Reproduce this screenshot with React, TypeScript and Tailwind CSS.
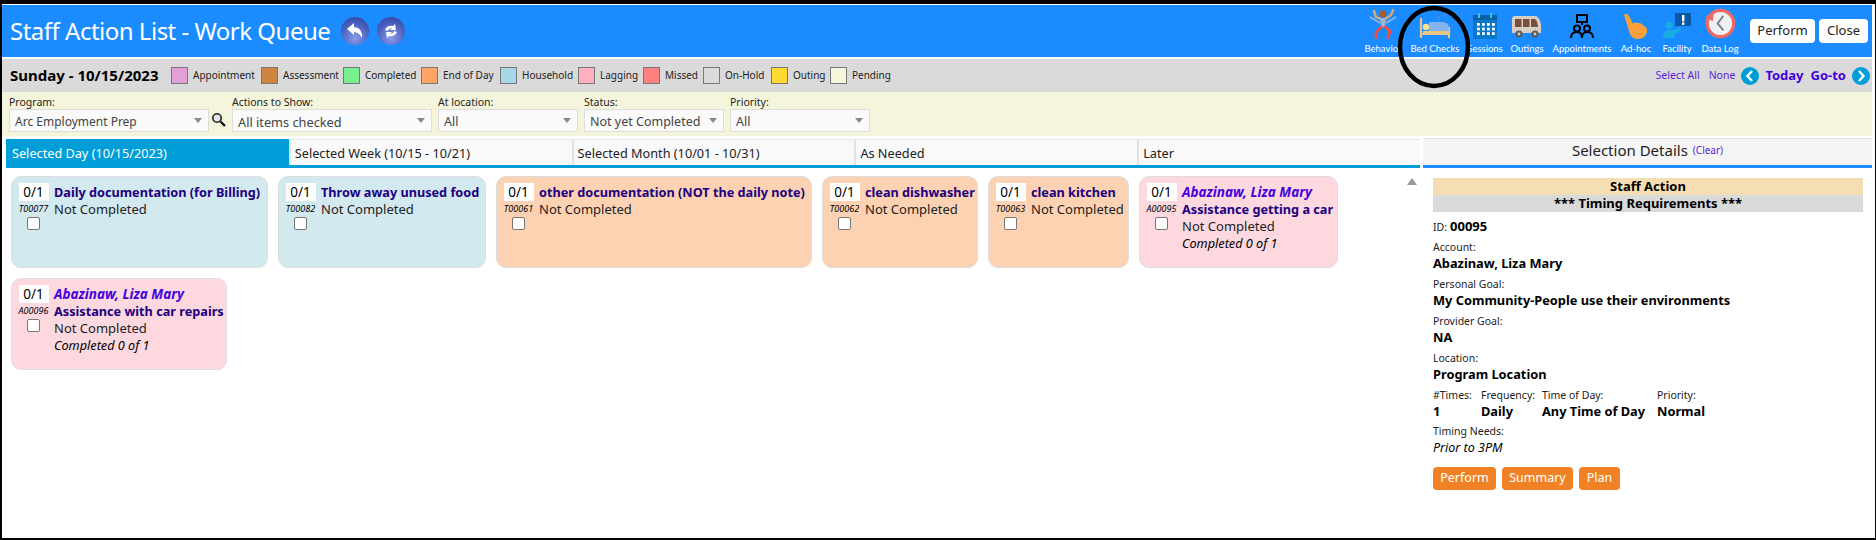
import React from 'react';

const legend = [
  { label: 'Appointment', color: 'bg-[#e29fd8]', w: 'w-[65px]' },
  { label: 'Assessment', color: 'bg-[#cd853f]', w: 'w-[57px]' },
  { label: 'Completed', color: 'bg-[#78f090]', w: 'w-[53px]' },
  { label: 'End of Day', color: 'bg-[#ffa566]', w: 'w-[54px]' },
  { label: 'Household', color: 'bg-[#a8d8e8]', w: 'w-[53px]' },
  { label: 'Lagging', color: 'bg-[#ffb0bc]', w: 'w-[40px]' },
  { label: 'Missed', color: 'bg-[#ff8080]', w: 'w-[35px]' },
  { label: 'On-Hold', color: 'bg-[#dadada]', w: 'w-[43px]' },
  { label: 'Outing', color: 'bg-[#ffd830]', w: 'w-[34px]' },
  { label: 'Pending', color: 'bg-[#f5f5dc]', w: 'w-[44px]' },
];

const filters = [
  { label: 'Program:', value: 'Arc Employment Prep', w: 'w-[200px]', text: 'text-[12px]', search: true },
  { label: 'Actions to Show:', value: 'All items checked', w: 'w-[200px]', text: 'text-[12.75px]' },
  { label: 'At location:', value: 'All', w: 'w-[140px]', text: 'text-[12.5px]' },
  { label: 'Status:', value: 'Not yet Completed', w: 'w-[140px]', text: 'text-[12.5px]' },
  { label: 'Priority:', value: 'All', w: 'w-[140px]', text: 'text-[12.5px]' },
];

const tabs = ['Selected Day (10/15/2023)', 'Selected Week (10/15 - 10/21)', 'Selected Month (10/01 - 10/31)', 'As Needed', 'Later'];

const cards = [
  { id: 'T00077', title: 'Daily documentation (for Billing)', bg: 'bg-[#d3e9f0]', w: 'w-[257px]' },
  { id: 'T00082', title: 'Throw away unused food', bg: 'bg-[#d3e9f0]', w: 'w-[208px]' },
  { id: 'T00061', title: 'other documentation (NOT the daily note)', bg: 'bg-[#fdd2b3]', w: 'w-[316px]' },
  { id: 'T00062', title: 'clean dishwasher', bg: 'bg-[#fdd2b3]', w: 'w-[156px]' },
  { id: 'T00063', title: 'clean kitchen', bg: 'bg-[#fdd2b3]', w: 'w-[141px]' },
  { id: 'A00095', name: 'Abazinaw, Liza Mary', title: 'Assistance getting a car', bg: 'bg-[#fdd8df]', w: 'w-[199px]' },
  { id: 'A00096', name: 'Abazinaw, Liza Mary', title: 'Assistance with car repairs', bg: 'bg-[#fdd8df]', w: 'w-[216px]' },
];

function BehaviorIcon() {
  return (
    <svg width="30" height="30" viewBox="0 0 30 30">
      <path d="M13 10 L8 8 L6 2 M17 10 L23 6 L25 1" stroke="#d9a878" strokeWidth="2.4" fill="none" strokeLinecap="round" />
      <circle cx="15" cy="5" r="3.4" fill="#a85a28" />
      <path d="M2 8 L12 14 M28 8 L18 14" stroke="#9cb4cc" strokeWidth="1.6" />
      <path d="M12 9h6l-1 9h-4z" fill="#9cb4d0" />
      <path d="M13 18 L8 23 L8 29 M17 18 L22 22 L20 29" stroke="#f04f3c" strokeWidth="2.8" fill="none" strokeLinecap="round" />
    </svg>
  );
}

function BedIcon() {
  return (
    <svg width="32" height="26" viewBox="0 0 32 26">
      <path d="M2 5v20M2 21h28M30 14v11" stroke="#eac483" strokeWidth="2.2" fill="none" />
      <path d="M10 18V9h13q7 0 7 6v3z" fill="#85b3ee" />
      <circle cx="7" cy="14" r="3.2" fill="#f6e48e" />
      <path d="M4 18h26v3H4z" fill="#eac483" />
      <path d="M18 4h3l-3 3h3M24 0h3l-3 3h3" stroke="#5a8fd8" strokeWidth="1" fill="none" />
    </svg>
  );
}

function CalendarIcon() {
  const cells = [];
  for (let y = 0; y < 3; y++) {
    for (let x = 0; x < 4; x++) {
      cells.push(<rect key={`${x}-${y}`} x={4 + x * 5} y={10 + y * 4.6} width="2.8" height="2.8" fill="#fff" />);
    }
  }
  return (
    <svg width="24" height="26" viewBox="0 0 24 26">
      <rect x="0" y="2" width="24" height="24" fill="#0a78c8" />
      <rect x="0" y="2" width="24" height="5" fill="#0860a8" />
      <rect x="5" y="0" width="2" height="5" fill="#35c4d8" />
      <rect x="17" y="0" width="2" height="5" fill="#35c4d8" />
      {cells}
    </svg>
  );
}

function VanIcon() {
  return (
    <svg width="30" height="24" viewBox="0 0 30 24">
      <path d="M3 1h20q4 0 6 8v9H0V4q0-3 3-3z" fill="#d7cdc5" />
      <rect x="3" y="4" width="6.5" height="8" fill="#78503c" />
      <rect x="11" y="4" width="6.5" height="8" fill="#78503c" />
      <path d="M19 4h4q2 1 3 8h-7z" fill="#78503c" />
      <circle cx="7" cy="19" r="3.6" fill="#605a55" />
      <circle cx="23" cy="19" r="3.6" fill="#605a55" />
      <circle cx="7" cy="19" r="1.4" fill="#ccc" />
      <circle cx="23" cy="19" r="1.4" fill="#ccc" />
    </svg>
  );
}

function MeetingIcon() {
  return (
    <svg width="24" height="25" viewBox="0 0 24 25" fill="none" stroke="#000" strokeWidth="2">
      <rect x="7" y="1" width="10" height="7" />
      <path d="M12 8v3" />
      <circle cx="7" cy="14.5" r="3" />
      <circle cx="17" cy="14.5" r="3" />
      <path d="M1 24q0-6 6-6 5 0 5 6 0-6 5-6 6 0 6 6" />
    </svg>
  );
}

function HandIcon() {
  return (
    <svg width="26" height="26" viewBox="0 0 26 26">
      <path d="M1 2q2-3 5 1l4 8 2-2 2 1 3 0 3 2q5 3 4 7-2 7-9 7-6 0-8-5z" fill="#f9a03c" />
    </svg>
  );
}

function FacilityIcon() {
  return (
    <svg width="28" height="26" viewBox="0 0 28 26">
      <rect x="12" y="0" width="16" height="13" fill="#0a58a8" />
      <rect x="19" y="2" width="2.4" height="6.5" fill="#fff" />
      <rect x="19" y="9.5" width="2.4" height="2.4" fill="#fff" />
      <circle cx="6" cy="12" r="3.6" fill="#18aee0" />
      <path d="M0 25q0-8 7-8h5l5-3 1 2-5 5h-2v4z" fill="#18aee0" />
    </svg>
  );
}

function ClockIcon() {
  return (
    <svg width="31" height="31" viewBox="0 0 32 32">
      <circle cx="16" cy="16" r="13.6" fill="#eef0f4" stroke="#ee6a62" strokeWidth="3.4" />
      <path d="M19 8l-6 8 6 7" stroke="#77808c" strokeWidth="2" fill="none" />
      <path d="M0 9l9 -4 -1 9z" fill="#ee6a62" />
    </svg>
  );
}

function GlobeButton({ children }: { children: React.ReactNode }) {
  return (
    <div className="w-[28px] h-[28px] rounded-full bg-[radial-gradient(circle_at_50%_75%,#8a9ae8,#4a62c0_55%,#2c3e9c)] flex items-center justify-center">
      {children}
    </div>
  );
}

function NavItem({ label, icon, w }: { label: string; icon: React.ReactNode; w: string }) {
  return (
    <div className={`${w} flex flex-col items-center`}>
      <div className="h-[32px] flex items-end justify-center">{icon}</div>
      <div className="font-['Lato',sans-serif] text-[9.5px] leading-[14px] mt-[3px] text-white whitespace-nowrap">{label}</div>
    </div>
  );
}

function Field({ label, value }: { label: string; value: string }) {
  return (
    <div>
      <div className="text-[10.5px] leading-[14px] text-[#222]">{label}</div>
      <div className="text-[12.8px] leading-[17px] font-bold text-black mt-[1px]">{value}</div>
    </div>
  );
}

function NavArrow({ dir }: { dir: 'left' | 'right' }) {
  return (
    <div className="w-[18px] h-[18px] rounded-full bg-[#009ed8] flex items-center justify-center ml-[6px]">
      <svg width="10" height="12" viewBox="0 0 10 12" fill="none">
        <path d={dir === 'left' ? 'M7 1L2.5 6L7 11' : 'M3 1L7.5 6L3 11'} stroke="#fff" strokeWidth="2.4" />
      </svg>
    </div>
  );
}

export default function App() {
  return (
    <div className="relative w-[1876px] h-[540px] bg-white border-black border-t-[4px] border-l-[2px] border-r-[1px] border-b-[2px] pr-[3px] pt-[1px] overflow-hidden font-['Noto_Sans',sans-serif] text-[#222]">
      {/* header */}
      <div className="h-[52px] bg-[#1a8cff] flex items-center pl-[8px] pr-[4px]">
        <div className="text-[24px] text-white leading-none whitespace-nowrap tracking-[-0.5px]">Staff Action List - Work Queue</div>
        <div className="flex gap-[8px] ml-[11px]">
          <GlobeButton>
            <svg width="18" height="16" viewBox="0 0 18 16">
              <path d="M1 6 L8 0 V4 Q17 5 16 15 Q13 9 8 9 V12z" fill="#fff" />
            </svg>
          </GlobeButton>
          <GlobeButton>
            <svg width="18" height="18" viewBox="0 0 18 18">
              <path d="M3 8 Q5 3 11 4 L13 2 L14 8 L8 8 L10 6 Q7 6 6 9z M15 10 Q13 15 7 14 L5 16 L4 10 L10 10 L8 12 Q11 12 12 9z" fill="#fff" />
            </svg>
          </GlobeButton>
        </div>
        <div className="ml-auto flex items-center">
          <div className="flex mr-[11px]">
            <NavItem w="w-[52px]" label="Behavior" icon={<BehaviorIcon />} />
            <NavItem w="w-[52px]" label="Bed Checks" icon={<BedIcon />} />
            <NavItem w="w-[48px]" label="Sessions" icon={<CalendarIcon />} />
            <NavItem w="w-[36px]" label="Outings" icon={<VanIcon />} />
            <NavItem w="w-[74px]" label="Appointments" icon={<MeetingIcon />} />
            <NavItem w="w-[34px]" label="Ad-hoc" icon={<HandIcon />} />
            <NavItem w="w-[48px]" label="Facility" icon={<FacilityIcon />} />
            <NavItem w="w-[38px]" label="Data Log" icon={<ClockIcon />} />
          </div>
          <div className="flex gap-[4px]">
            <button className="h-[24px] w-[65px] bg-white rounded-[4px] text-[13px] text-[#222]">Perform</button>
            <button className="h-[24px] w-[49px] bg-white rounded-[4px] text-[13px] text-[#222]">Close</button>
          </div>
        </div>
      </div>

      {/* date and legend */}
      <div className="h-[33px] mt-[2px] bg-[#dadada] flex items-center pl-[8px] pr-[2px]">
        <div className="text-[15px] font-bold text-black whitespace-nowrap w-[161px]">Sunday - 10/15/2023</div>
        <div className="flex items-center gap-[3px] -mt-[1px]">
          {legend.map((l) => (
            <div key={l.label} className="flex items-center">
              <div className={`w-[17px] h-[17px] border border-[#777] ${l.color}`} />
              <div className={`text-[10px] ml-[5px] whitespace-nowrap ${l.w}`}>{l.label}</div>
            </div>
          ))}
        </div>
        <div className="ml-auto flex items-center text-[#5a1ee0]">
          <span className="text-[10.5px]">Select All</span>
          <span className="text-[10.5px] ml-[9px]">None</span>
          <NavArrow dir="left" />
          <span className="text-[13px] font-bold ml-[6px] text-[#4400dd]">Today</span>
          <span className="text-[13px] font-bold ml-[7px] text-[#4400dd]">Go-to</span>
          <NavArrow dir="right" />
        </div>
      </div>

      {/* filters */}
      <div className="h-[44px] bg-[#f5f5dc] flex items-start gap-[6px] pl-[7px] pt-[3px]">
        {filters.map((f) => (
          <div key={f.label} className="flex">
            <div>
              <div className="text-[10.5px] leading-[14px] text-[#222]">{f.label}</div>
              <div className={`${f.w} h-[23px] bg-[#fafafa] border border-[#ddd] flex items-center justify-between pl-[5px] pr-[6px]`}>
                <span className={`${f.text} leading-[16px] pt-[3px] text-[#444] whitespace-nowrap`}>{f.value}</span>
                <svg width="8" height="5" viewBox="0 0 8 5"><path d="M0 0h8L4 5z" fill="#888" /></svg>
              </div>
            </div>
            {f.search && (
              <svg className="mt-[17px] ml-[2px]" width="15" height="16" viewBox="0 0 15 16" fill="none">
                <circle cx="6" cy="6" r="4.2" stroke="#222" strokeWidth="1.6" fill="#dfe8ee" />
                <path d="M9.5 9.5L14 14" stroke="#111" strokeWidth="2.4" />
              </svg>
            )}
          </div>
        ))}
      </div>

      {/* main */}
      <div className="flex mt-[3px] pl-[4px]">
        <div className="w-[1414px]">
          <div className="flex h-[29px] border-b-[3px] border-[#009ed8]">
            {tabs.map((t, i) => (
              <div
                key={t}
                className={`w-[283px] text-[12.7px] flex items-center pt-[3px] whitespace-nowrap ${i === 0 ? 'bg-[#009ed8] text-white pl-[6px]' : 'bg-[#f9f9f9] border-t border-l-2 border-[#e2e2e2] text-[#222] pl-[4px]'}`}
              >
                {t}
              </div>
            ))}
          </div>
          <div className="relative flex flex-wrap gap-[10px] pt-[8px] pl-[5px] pr-[60px]">
            {cards.map((c) => (
              <div key={c.id} className={`${c.w} h-[92px] ${c.bg} border border-[#ddd] rounded-[10px] flex pl-[6px] pt-[6px]`}>
                <div className="w-[31px] flex flex-col items-center shrink-0">
                  <div className="w-[30px] h-[18px] bg-white text-[13.5px] leading-[19px] text-center text-black">0/1</div>
                  <div className="text-[9px] leading-[13px] italic text-black mt-[1px]">{c.id}</div>
                  <input type="checkbox" className="appearance-none w-[13px] h-[13px] bg-white border border-[#767676] rounded-[2px] mt-[2px]" />
                </div>
                <div className="pl-[5px] pt-[1px] text-[12.7px] leading-[17px] whitespace-nowrap">
                  {c.name && <div className="font-bold italic text-[13.5px] text-[#4400dd]">{c.name}</div>}
                  <div className="font-bold text-[#200080]">{c.title}</div>
                  <div className="text-[13px] text-[#222]">Not Completed</div>
                  {c.name && <div className="italic text-black">Completed 0 of 1</div>}
                </div>
              </div>
            ))}
            <svg className="absolute right-[3px] top-[10px]" width="10" height="7" viewBox="0 0 10 7"><path d="M0 7h10L5 0z" fill="#999" /></svg>
          </div>
        </div>

        <div className="ml-[3px] w-[449px] -mt-[1px]">
          <div className="h-[30px] bg-[#f5f5f5] border-t border-[#e2e2e2] border-b-[3px] border-b-[#1a8cff] flex items-center justify-center gap-[5px] pb-[3px]">
            <span className="text-[15px] text-[#222]">Selection Details</span>
            <span className="text-[10px] text-[#5a1ee0]">(Clear)</span>
          </div>
          <div className="pl-[10px] pr-[9px] pt-[10px]">
            <div className="text-center text-[13px] font-bold leading-[17px] text-black bg-[#f5deb3]">Staff Action</div>
            <div className="text-center text-[13px] font-bold leading-[17px] text-black bg-[#dadada]">*** Timing Requirements ***</div>
            <div className="mt-[5px] flex items-baseline gap-[3px]">
              <span className="text-[10.5px]">ID:</span>
              <span className="text-[13px] font-bold text-black">00095</span>
            </div>
            <div className="flex flex-col gap-[5px] mt-[3px]">
              <Field label="Account:" value="Abazinaw, Liza Mary" />
              <Field label="Personal Goal:" value="My Community-People use their environments" />
              <Field label="Provider Goal:" value="NA" />
              <Field label="Location:" value="Program Location" />
            </div>
            <div className="flex mt-[5px]">
              <div className="w-[48px]"><Field label="#Times:" value="1" /></div>
              <div className="w-[61px]"><Field label="Frequency:" value="Daily" /></div>
              <div className="w-[115px]"><Field label="Time of Day:" value="Any Time of Day" /></div>
              <div><Field label="Priority:" value="Normal" /></div>
            </div>
            <div className="mt-[4px]">
              <div className="text-[10.5px] leading-[14px]">Timing Needs:</div>
              <div className="text-[12.5px] leading-[18px] mt-[1px] italic text-black">Prior to 3PM</div>
            </div>
            <div className="flex gap-[6px] mt-[10px]">
              <button className="h-[23px] w-[63px] bg-[#f08225] text-white text-[12.5px] rounded-[4px]">Perform</button>
              <button className="h-[23px] w-[71px] bg-[#f08225] text-white text-[12.5px] rounded-[4px]">Summary</button>
              <button className="h-[23px] w-[41px] bg-[#f08225] text-white text-[12.5px] rounded-[4px]">Plan</button>
            </div>
          </div>
        </div>
      </div>

      {/* hand-drawn circle over the Bed Checks item */}
      <svg className="absolute left-[1393px] top-[-1px]" width="80" height="90" viewBox="0 0 80 90" fill="none">
        <ellipse cx="39" cy="44" rx="34" ry="39" stroke="#000" strokeWidth="4.5" />
      </svg>
    </div>
  );
}
